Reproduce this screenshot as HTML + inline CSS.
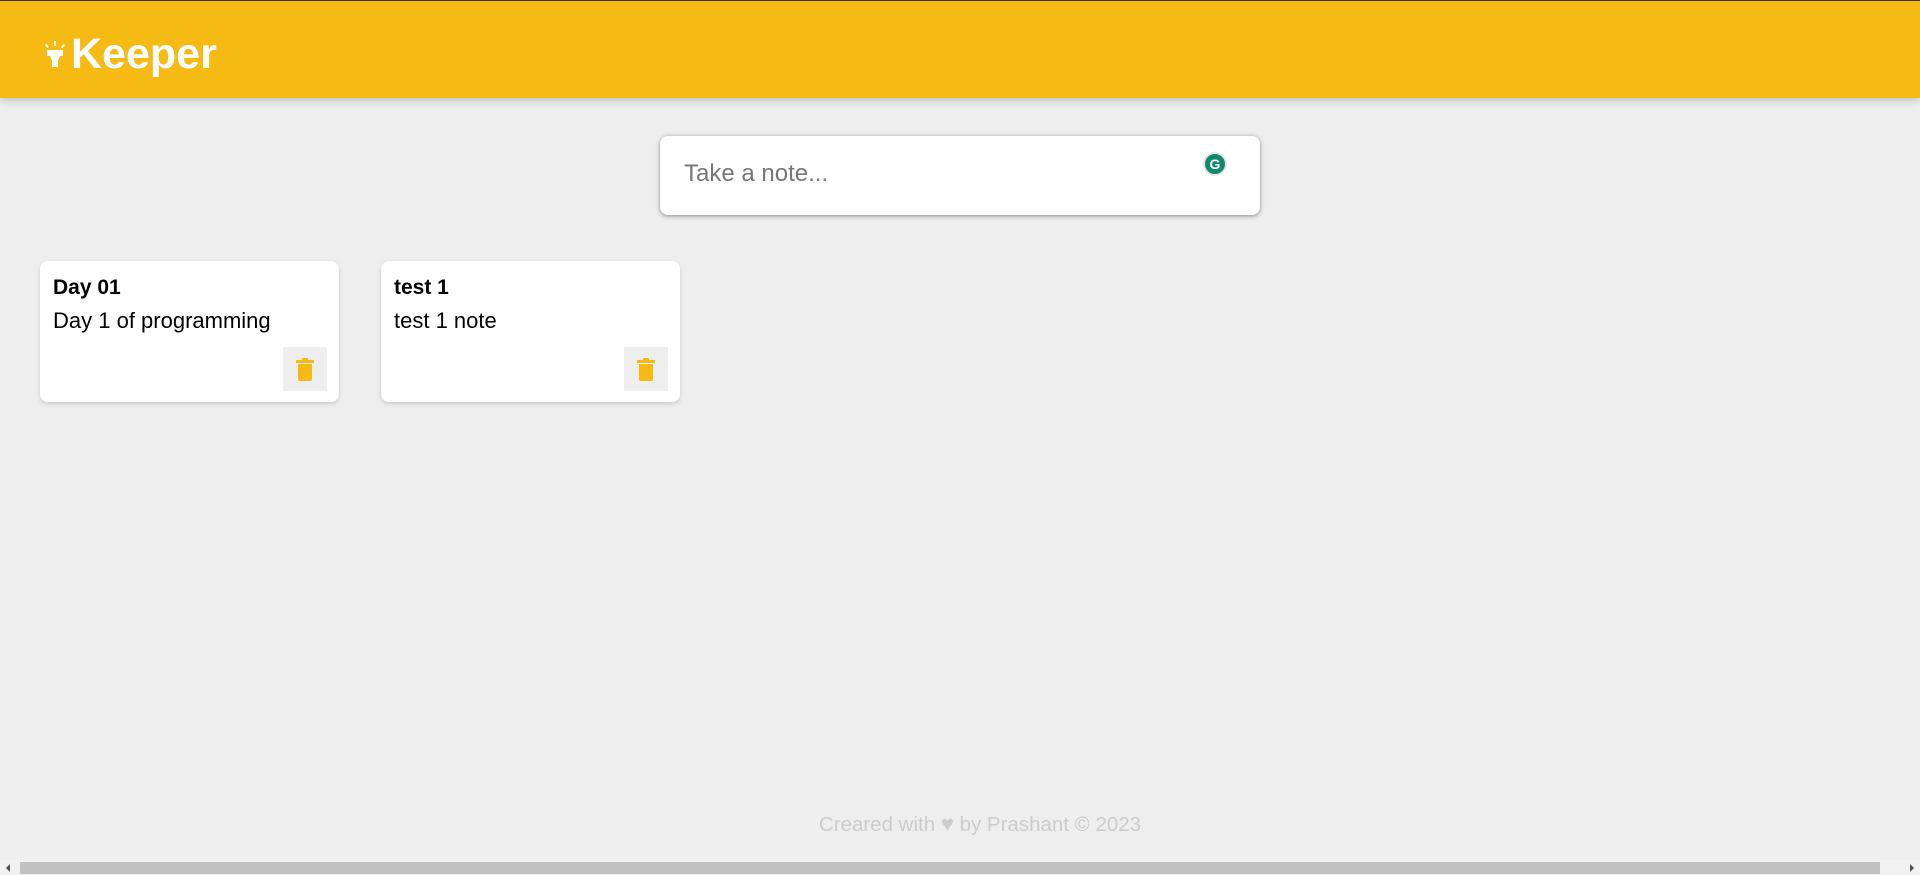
<!DOCTYPE html>
<html><head><meta charset="utf-8"><style>
*{box-sizing:border-box;margin:0;padding:0}
body{width:1920px;height:875px;overflow:hidden;background:#eeeeee;font-family:"Liberation Sans",Arial,sans-serif;position:relative}
header{position:absolute;left:0;top:0;width:1920px;height:98px;background:#f5ba13;border-top:1px solid #333;box-shadow:0 0 10px 0 rgba(0,0,0,.3)}
.logo{position:absolute;left:44px;top:29px;color:#fff;font-size:43px;font-weight:bold;letter-spacing:0px;display:flex;align-items:center}
.input{position:absolute;left:660px;top:136px;width:600px;height:79px;background:#fff;border-radius:8px;box-shadow:0 1px 5px rgb(138,137,137)}
.input span{position:absolute;left:24px;top:24px;font-size:24px;color:#777}
.g{position:absolute;left:1203px;top:152px;width:24px;height:24px;border-radius:50%;background:#12896b;border:2px solid #e6e6e6;color:#fff;font-size:14px;font-weight:bold;text-align:center;line-height:20px}
.card{position:absolute;top:261px;width:299px;height:141px;background:#fff;border-radius:8px;box-shadow:0 2px 5px #ccc;padding:15px 13px}
.card h1{font-size:21px;font-weight:bold;margin-bottom:8px;color:#000}
.card p{font-size:22px;color:#000}
.del{position:absolute;left:243px;top:86px;width:44px;height:44px;background:#eee;display:flex;align-items:center;justify-content:center}
footer{position:absolute;top:811px;left:20px;width:1920px;text-align:center;color:#ccc;font-size:20.5px}
.sb{position:absolute;left:0;top:860px;width:1920px;height:15px;background:#f1f1f1}
.thumb{position:absolute;left:20px;top:2px;width:1860px;height:12px;background:#c1c1c1}
.arr{position:absolute;top:4px;width:0;height:0;border-top:4px solid transparent;border-bottom:4px solid transparent}
</style></head><body>
<header><div class="logo">
<svg width="22" height="28" viewBox="0 0 22 28" style="margin-right:5px"><g fill="#fff"><rect x="3" y="9" width="16" height="6"/><path d="M6 15h10l-2 5v6H8v-6z"/><rect x="10" y="0" width="2" height="5"/><rect x="2" y="3" width="2" height="4" transform="rotate(-40 3 5)"/><rect x="18" y="3" width="2" height="4" transform="rotate(40 19 5)"/></g></svg>Keeper</div></header>
<div class="input"><span>Take a note...</span></div>
<div class="g">G</div>
<div class="card" style="left:40px"><h1>Day 01</h1><p>Day 1 of programming</p><div class="del"><svg width="20" height="24" viewBox="0 0 20 24"><g fill="#f5ba13"><rect x="1" y="3" width="18" height="3"/><rect x="7" y="1" width="6" height="3"/><path d="M3 7h14v15a2 2 0 0 1-2 2H5a2 2 0 0 1-2-2z"/></g></svg></div></div>
<div class="card" style="left:381px"><h1>test 1</h1><p>test 1 note</p><div class="del"><svg width="20" height="24" viewBox="0 0 20 24"><g fill="#f5ba13"><rect x="1" y="3" width="18" height="3"/><rect x="7" y="1" width="6" height="3"/><path d="M3 7h14v15a2 2 0 0 1-2 2H5a2 2 0 0 1-2-2z"/></g></svg></div></div>
<footer>Creared with <span style="font-size:22px">♥</span> by Prashant © 2023</footer>
<div class="sb"><div class="arr" style="left:6px;border-right:4px solid #505050"></div><div class="thumb"></div><div class="arr" style="right:6px;border-left:4px solid #505050"></div></div>
</body></html>
